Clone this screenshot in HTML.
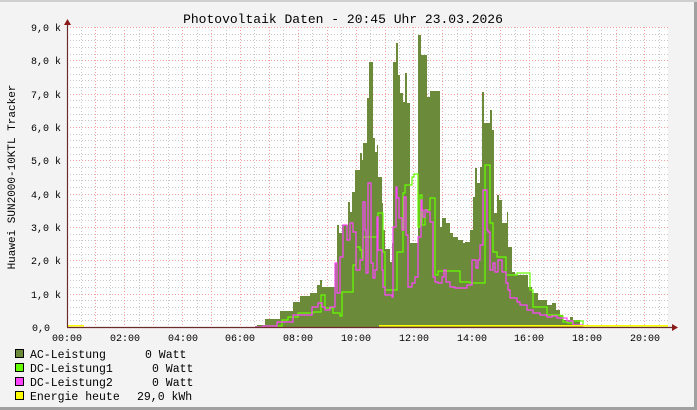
<!DOCTYPE html>
<html><head><meta charset="utf-8"><style>
html,body{margin:0;padding:0;background:#f3f3f3}
svg{display:block}
text{font-family:"Liberation Mono",monospace;fill:#000}
</style></head><body>
<svg width="697" height="410" xmlns="http://www.w3.org/2000/svg">
<rect x="0" y="0" width="697" height="410" fill="#f3f3f3"/>
<rect x="0" y="407" width="697" height="3" fill="#a0a0a0"/>
<rect x="694" y="0" width="3" height="410" fill="#a0a0a0"/>
<rect x="0" y="0" width="697" height="2" fill="#cfcfcf"/>
<rect x="67" y="27" width="601" height="300" fill="#fff"/>
<g stroke="#c8c8c8" stroke-width="1" stroke-dasharray="1,2">
<path d="M81.5 27V327M110.5 27V327M139.5 27V327M168.5 27V327M197.5 27V327M226.5 27V327M254.5 27V327M283.5 27V327M312.5 27V327M341.5 27V327M370.5 27V327M399.5 27V327M428.5 27V327M457.5 27V327M486.5 27V327M515.5 27V327M543.5 27V327M572.5 27V327M601.5 27V327M630.5 27V327M659.5 27V327"/>
<path d="M67 34.5H668M67 40.5H668M67 47.5H668M67 54.5H668M67 67.5H668M67 74.5H668M67 80.5H668M67 87.5H668M67 100.5H668M67 107.5H668M67 114.5H668M67 120.5H668M67 134.5H668M67 140.5H668M67 147.5H668M67 154.5H668M67 167.5H668M67 174.5H668M67 180.5H668M67 187.5H668M67 200.5H668M67 207.5H668M67 214.5H668M67 220.5H668M67 234.5H668M67 240.5H668M67 247.5H668M67 254.5H668M67 267.5H668M67 274.5H668M67 280.5H668M67 287.5H668M67 300.5H668M67 307.5H668M67 314.5H668M67 320.5H668"/>
</g>
<g stroke="#f0a0a0" stroke-width="1" stroke-dasharray="1,2">
<path d="M95.5 27V327M124.5 27V327M153.5 27V327M182.5 27V327M211.5 27V327M240.5 27V327M269.5 27V327M298.5 27V327M327.5 27V327M356.5 27V327M385.5 27V327M413.5 27V327M442.5 27V327M471.5 27V327M500.5 27V327M529.5 27V327M558.5 27V327M587.5 27V327M616.5 27V327M644.5 27V327"/>
<path d="M67 27.5H668M67 60.5H668M67 94.5H668M67 127.5H668M67 160.5H668M67 194.5H668M67 227.5H668M67 260.5H668M67 294.5H668"/>
</g>
<path fill="#6b8a3a" d="M255 327V326H257V325H265V319H280V311H293V302H300V296H310V293H317V285H320V280H322V287H335V263H337V225H339V233H342V225H348V202H350V212H352V192H355V170H360V153H362V160H363V143H367V98H369V62H373V138H375V152H377V145H378V177H382V203H383V230H385V249H390V262H392V243H393V62H396V43H398V75H400V93H403V102H405V73H407V103H410V243H418V35H421V55H427V97H430V91H440V227H442V218H446V223H450V233H453V237H458V240H463V243H465V242H470V230H473V197H475V168H477V183H480V167H482V92H484V123H490V110H492V130H494V213H497V195H499V200H502V223H507V212H508V247H512V272H515V275H528V287H532V293H538V300H547V305H552V303H556V310H560V315H563V320H570V317H573V320H580V325H583V327Z"/>
<path fill="none" stroke="#66ff00" stroke-width="1.2" d="M255 327H263V326H282V320H288V317H298V313H313V312H321V295H325V308H333V313H340V316H342V292H353V265H356V247H360V250H362V258H363V237H378V213H383V252H385V290H397V252H403V193H405V185H412V177H414V174H418V227H420V195H422V225H425V210H430V198H435V275H438V271H460V282H470V283H485V165H490V223H493V252H497V257H506V275H517V273H530V290H533V307H547V315H560V316H563V322H568V323H572V321H583V326H668"/>
<path fill="none" stroke="#ff44ff" stroke-width="1.2" d="M255 327H263V326H277V322H293V315H312V307H318V303H322V307H325V310H330V307H335V263H337V293H340V257H343V225H347V240H350V223H353V232H356V270H360V260H363V202H365V230H366V273H368V183H371V263H373V278H375V270H377V217H378V250H382V270H383V287H385V295H392V297H393V227H396V187H397V198H399V218H402V230H404V197H406V235H408V287H412V283H415V277H418V237H421V200H422V210H423V217H425V210H427V212H430V222H433V277H435V282H438V283H442V277H444V270H446V282H450V287H455V288H467V285H472V260H476V268H478V260H480V245H483V190H487V230H488V232H490V270H493V263H495V272H498V260H502V272H506V283H508V290H510V298H517V302H520V305H527V310H533V313H540V315H547V317H552V316H557V318H567V321H573V325H583V327"/>
<rect x="379" y="325" width="289" height="1.5" fill="#ffff00"/>
<rect x="67" y="325" width="17" height="1.5" fill="#ffff00"/>
<path d="M67 327.5H672" stroke="#6b2b2b" stroke-width="1.2"/>
<path d="M67.5 327V24" stroke="#6b2b2b" stroke-width="1.2"/>
<path d="M672 324L678 327.5L672 331Z" fill="#8b1a1a"/>
<path d="M64 25L67.5 19L71 25Z" fill="#8b1a1a"/>
<g font-size="10" text-anchor="end">
<text x="61" y="31">9,0 k</text><text x="61" y="64">8,0 k</text><text x="61" y="98">7,0 k</text><text x="61" y="131">6,0 k</text><text x="61" y="164">5,0 k</text><text x="61" y="198">4,0 k</text><text x="61" y="231">3,0 k</text><text x="61" y="264">2,0 k</text><text x="61" y="298">1,0 k</text><text x="50" y="331">0,0</text>
</g>
<g font-size="10" text-anchor="middle">
<text x="67" y="341">00:00</text><text x="125" y="341">02:00</text><text x="183" y="341">04:00</text><text x="240" y="341">06:00</text><text x="298" y="341">08:00</text><text x="356" y="341">10:00</text><text x="414" y="341">12:00</text><text x="472" y="341">14:00</text><text x="529" y="341">16:00</text><text x="587" y="341">18:00</text><text x="645" y="341">20:00</text>
</g>
<text x="343" y="23" font-size="13" text-anchor="middle">Photovoltaik Daten - 20:45 Uhr 23.03.2026</text>
<text transform="translate(15,177) rotate(-90)" font-size="11" text-anchor="middle">Huawei SUN2000-10KTL Tracker</text>
<g stroke="#000" stroke-width="1">
<rect x="15.5" y="349.5" width="8" height="8" fill="#6b8a3a"/>
<rect x="15.5" y="363.5" width="8" height="8" fill="#66ff00"/>
<rect x="15.5" y="377.5" width="8" height="8" fill="#ff44ff"/>
<rect x="15.5" y="391.5" width="8" height="8" fill="#ffff00"/>
</g>
<g font-size="11.5">
<text x="30" y="358">AC-Leistung</text><text x="145" y="358">0 Watt</text>
<text x="30" y="372">DC-Leistung1</text><text x="152" y="372">0 Watt</text>
<text x="30" y="386">DC-Leistung2</text><text x="152" y="386">0 Watt</text>
<text x="30" y="400">Energie heute</text><text x="137" y="400">29,0 kWh</text>
</g>
</svg>
</body></html>
